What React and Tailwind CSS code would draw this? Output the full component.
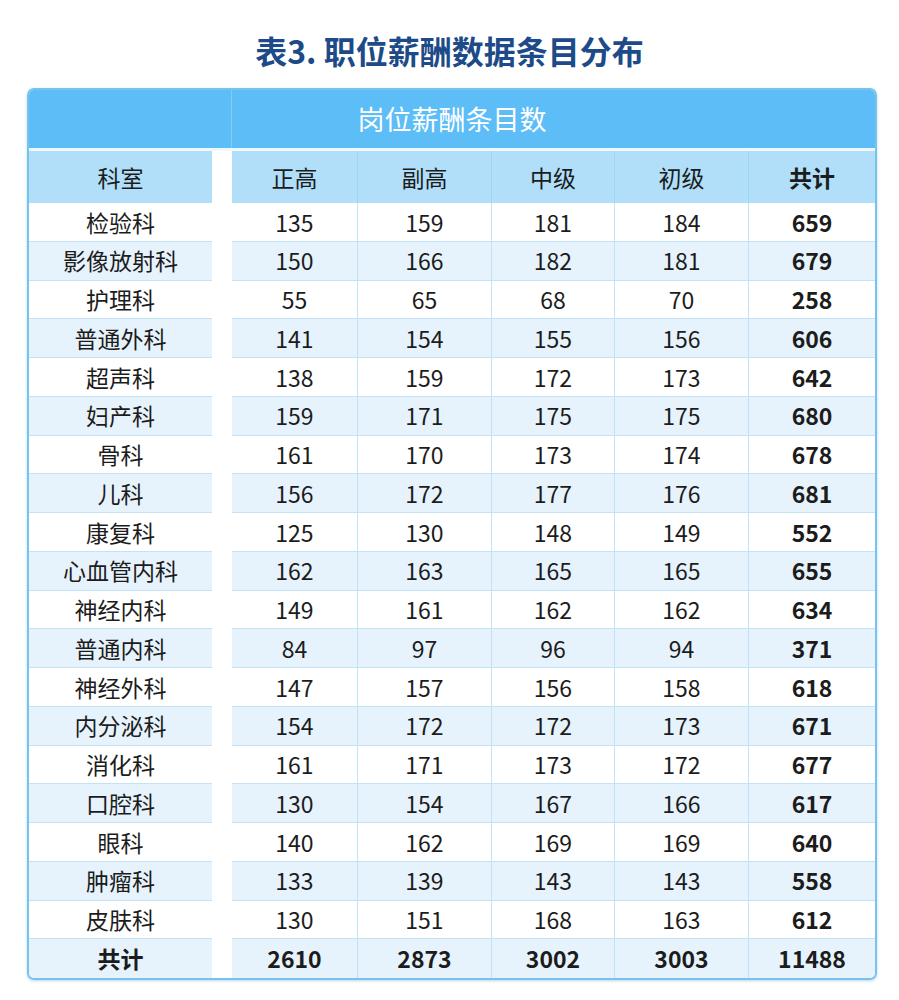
import React from "react";

const rows = [
  ["检验科", 135, 159, 181, 184, 659],
  ["影像放射科", 150, 166, 182, 181, 679],
  ["护理科", 55, 65, 68, 70, 258],
  ["普通外科", 141, 154, 155, 156, 606],
  ["超声科", 138, 159, 172, 173, 642],
  ["妇产科", 159, 171, 175, 175, 680],
  ["骨科", 161, 170, 173, 174, 678],
  ["儿科", 156, 172, 177, 176, 681],
  ["康复科", 125, 130, 148, 149, 552],
  ["心血管内科", 162, 163, 165, 165, 655],
  ["神经内科", 149, 161, 162, 162, 634],
  ["普通内科", 84, 97, 96, 94, 371],
  ["神经外科", 147, 157, 156, 158, 618],
  ["内分泌科", 154, 172, 172, 173, 671],
  ["消化科", 161, 171, 173, 172, 677],
  ["口腔科", 130, 154, 167, 166, 617],
  ["眼科", 140, 162, 169, 169, 640],
  ["肿瘤科", 133, 139, 143, 143, 558],
  ["皮肤科", 130, 151, 168, 163, 612],
];

const total = ["共计", 2610, 2873, 3002, 3003, 11488];

const cols = "grid grid-cols-[183px_20px_126px_134px_123px_134px_126px]";

function Row({ data, shade, last }) {
  const bg = shade ? "bg-[#e7f3fc]" : "bg-white";
  const line = last ? "" : "border-b border-[#c3e2f5]";
  return (
    <div className={`${cols} h-[38.75px] text-[23px] text-[#1c1c1c]`}>
      <div className={`${bg} ${line} flex items-center justify-center ${last ? "font-bold" : ""}`}>
        {data[0]}
      </div>
      <div className="bg-white" />
      {data.slice(1).map((v, i) => (
        <div
          key={i}
          className={`${bg} ${line} flex items-center justify-center ${i < 4 ? "border-r border-r-[#c3e2f5]" : ""} ${last || i === 4 ? "font-bold" : ""}`}
        >
          {v}
        </div>
      ))}
    </div>
  );
}

export default function App() {
  return (
    <div className="w-[899px] bg-white pb-[20px] font-['Noto_Sans_CJK_SC','Noto_Sans',sans-serif]">
      <h1 className="pt-[30px] mb-[18px] text-center text-[32px] leading-[40px] font-bold text-[#1d4a88]">
        表3. 职位薪酬数据条目分布
      </h1>
      <div className="ml-[27px] w-[850px] border-2 border-[#78c3ec] rounded-[7px] overflow-hidden shadow-[0_1px_3px_rgba(60,140,200,0.35)]">
        <div className="grid grid-cols-[203px_1fr] h-[58px] bg-[#5cbdf7]">
          <div className="row-start-1 col-start-1 border-r border-[#80cdf9]" />
          <div className="row-start-1 col-start-1 col-span-2 flex items-center justify-center text-[27px] text-white">
            岗位薪酬条目数
          </div>
        </div>
        <div className="h-[3px] bg-[#eef8fe]" />
        <div className={`${cols} h-[52px] text-[23px] text-[#1c1c1c]`}>
          <div className="bg-[#b1dff9] flex items-center justify-center">科室</div>
          <div className="bg-white" />
          {["正高", "副高", "中级", "初级"].map((h) => (
            <div key={h} className="bg-[#b1dff9] border-r border-[#9fd5f4] flex items-center justify-center">
              {h}
            </div>
          ))}
          <div className="bg-[#b1dff9] flex items-center justify-center font-bold">共计</div>
        </div>
        {rows.map((r, i) => (
          <Row key={r[0]} data={r} shade={i % 2 === 1} />
        ))}
        <Row data={total} shade last />
      </div>
    </div>
  );
}
